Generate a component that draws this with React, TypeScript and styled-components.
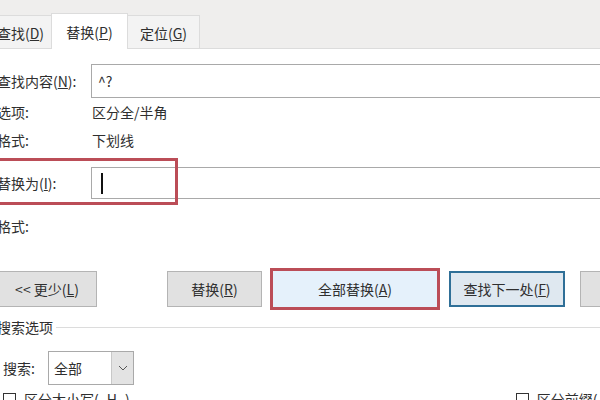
import React from 'react';
import styled, { createGlobalStyle } from 'styled-components';

const GlobalStyle = createGlobalStyle`
  html, body {
    margin: 0;
    padding: 0;
    background: #ffffff;
  }
  body {
    font-family: "Noto Sans CJK SC", "Noto Sans", sans-serif;
  }
`;

const Dialog = styled.div`
  width: 600px;
  height: 400px;
  overflow: hidden;
  background: #ffffff;
  color: #2f2f2f;
  font-size: 14px;
  position: relative;
`;

const TabBar = styled.div`
  height: 48px;
  background: #efeeed;
  border-bottom: 1px solid #dcdcdc;
  display: flex;
  align-items: flex-end;
  margin-left: -10px;
`;

const Tab = styled.div<{ $active?: boolean; $width: number }>`
  width: ${({ $width }) => $width}px;
  height: ${({ $active }) => ($active ? 36 : 33)}px;
  box-sizing: border-box;
  display: flex;
  align-items: center;
  justify-content: center;
  background: ${({ $active }) => ($active ? '#ffffff' : '#f3f3f3')};
  border: 1px solid #dcdcdc;
  border-bottom: none;
  margin-bottom: ${({ $active }) => ($active ? '-1px' : '0')};
  margin-left: -1px;
  position: relative;
  z-index: ${({ $active }) => ($active ? 1 : 0)};
  padding-top: ${({ $active }) => ($active ? '0' : '1px')};
`;

const Body = styled.div`
  display: flex;
  flex-direction: column;
  margin-left: -3px;
  margin-top: 15px;
`;

const FieldRow = styled.div<{ $height?: number }>`
  display: flex;
  align-items: center;
  height: ${({ $height }) => $height || 34}px;
`;

const InfoRow = styled.div<{ $top?: number }>`
  display: flex;
  align-items: center;
  height: 28px;
  margin-top: ${({ $top }) => $top || 0}px;
`;

const Label = styled.div`
  width: 94px;
  flex-shrink: 0;
  white-space: nowrap;
`;

const Value = styled.div`
  padding-left: 1px;
`;

const TextInput = styled.div`
  flex: 1;
  height: 100%;
  box-sizing: border-box;
  border: 1px solid #a9a9a9;
  border-right: none;
  margin-right: -20px;
  background: #fff;
  display: flex;
  align-items: center;
  padding-left: 6px;
  font-size: 14px;
`;

const Caret = styled.span`
  display: block;
  width: 2px;
  height: 21px;
  background: #111;
  margin-left: 3px;
`;

const ReplaceRow = styled.div`
  position: relative;
  margin-top: 4px;
  padding: 9px 0 6px;
`;

const Highlight = styled.div`
  position: absolute;
  left: -10px;
  top: 0;
  width: 191px;
  height: 47px;
  box-sizing: border-box;
  border: 3px solid #bb4d57;
  pointer-events: none;
`;

const ButtonRow = styled.div`
  display: flex;
  align-items: center;
  margin-top: 28px;
  height: 42px;
`;

const Button = styled.div<{ $width: number; $gap?: number; $variant?: 'marked' | 'focused' }>`
  width: ${({ $width }) => $width}px;
  margin-left: ${({ $gap }) => $gap || 0}px;
  height: ${({ $variant }) => ($variant === 'marked' ? 42 : 36)}px;
  box-sizing: border-box;
  flex-shrink: 0;
  display: flex;
  align-items: center;
  justify-content: center;
  white-space: nowrap;
  background: ${({ $variant }) =>
    $variant === 'marked' ? '#e5f1fb' : $variant === 'focused' ? '#dfe8f0' : '#e1e1e1'};
  border: ${({ $variant }) =>
    $variant === 'marked'
      ? '3px solid #bb4d57'
      : $variant === 'focused'
      ? '2px solid #2f6f97'
      : '1px solid #b4b4b4'};
`;

const GroupHeader = styled.div`
  display: flex;
  align-items: center;
  height: 28px;
  margin-top: 3px;
`;

const GroupTitle = styled.span`
  white-space: nowrap;
  padding-right: 3px;
`;

const GroupLine = styled.div`
  flex: 1;
  height: 1px;
  background: #dcdcdc;
`;

const SearchRow = styled.div`
  display: flex;
  align-items: center;
  height: 34px;
  margin-top: 10px;
  padding-left: 6px;
`;

const SearchLabel = styled.span`
  width: 45px;
`;

const Select = styled.div`
  width: 86px;
  height: 100%;
  box-sizing: border-box;
  border: 1px solid #a9a9a9;
  display: flex;
  background: #fff;
`;

const SelectValue = styled.div`
  flex: 1;
  display: flex;
  align-items: center;
  padding-left: 5px;
`;

const SelectArrow = styled.div`
  width: 21px;
  background: #e3e3e3;
  border-left: 1px solid #c8c8c8;
  display: flex;
  align-items: center;
  justify-content: center;
`;

const CheckRow = styled.div`
  display: flex;
  align-items: center;
  margin-top: 4px;
  padding-left: 6px;
`;

const Check = styled.div<{ $gap?: number }>`
  display: flex;
  align-items: center;
  gap: 8px;
  margin-left: ${({ $gap }) => $gap || 0}px;
  white-space: nowrap;
`;

const Box = styled.span`
  width: 13px;
  height: 13px;
  box-sizing: border-box;
  border: 1px solid #333;
  background: #fff;
`;

const App: React.FC = () => {
  return (
    <Dialog>
      <GlobalStyle />
      <TabBar>
        <Tab $width={63}>查找(<u>D</u>)</Tab>
        <Tab $width={77} $active>替换(<u>P</u>)</Tab>
        <Tab $width={73}>定位(<u>G</u>)</Tab>
      </TabBar>
      <Body>
        <FieldRow>
          <Label>查找内容(<u>N</u>):</Label>
          <TextInput>^?</TextInput>
        </FieldRow>
        <InfoRow>
          <Label>选项:</Label>
          <Value>区分全/半角</Value>
        </InfoRow>
        <InfoRow>
          <Label>格式:</Label>
          <Value>下划线</Value>
        </InfoRow>
        <ReplaceRow>
          <FieldRow $height={32}>
            <Label>替换为(<u>I</u>):</Label>
            <TextInput>
              <Caret />
            </TextInput>
          </FieldRow>
          <Highlight />
        </ReplaceRow>
        <InfoRow $top={7}>
          <Label>格式:</Label>
        </InfoRow>
        <ButtonRow>
          <Button $width={100}>&lt;&lt; 更少(<u>L</u>)</Button>
          <Button $width={95} $gap={70}>替换(<u>R</u>)</Button>
          <Button $width={170} $gap={8} $variant="marked">全部替换(<u>A</u>)</Button>
          <Button $width={116} $gap={9} $variant="focused">查找下一处(<u>F</u>)</Button>
          <Button $width={90} $gap={15}>取消</Button>
        </ButtonRow>
        <GroupHeader>
          <GroupTitle>搜索选项</GroupTitle>
          <GroupLine />
        </GroupHeader>
        <SearchRow>
          <SearchLabel>搜索:</SearchLabel>
          <Select>
            <SelectValue>全部</SelectValue>
            <SelectArrow>
              <svg width="10" height="6" viewBox="0 0 10 6">
                <path d="M1 1l4 4 4-4" fill="none" stroke="#555" strokeWidth="1" />
              </svg>
            </SelectArrow>
          </Select>
        </SearchRow>
        <CheckRow>
          <Check>
            <Box />
            区分大小写(<u>H</u>)
          </Check>
          <Check $gap={386}>
            <Box />
            区分前缀(<u>X</u>)
          </Check>
        </CheckRow>
      </Body>
    </Dialog>
  );
};

export default App;
